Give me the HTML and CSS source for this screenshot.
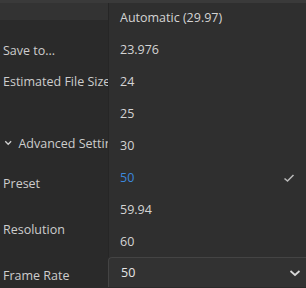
FILE: index.html
```html
<!DOCTYPE html>
<html lang="en">

<head>
	<meta charset="UTF-8">
	<meta name="viewport" content="width=device-width, initial-scale=1.0">
	<title>Export Settings</title>
	<link rel="stylesheet" href="styles.css">
</head>

<body>
	<div class="panel">
		<div class="top-strip"></div>
		<div class="top-field"></div>

		<div class="row row-save"><span class="label">Save to...</span></div>
		<div class="row row-size"><span class="label">Estimated File Size</span></div>
		<div class="row row-advanced">
			<svg class="chevron" width="10" height="8" viewBox="0 0 10 8">
				<path d="M1.5 2 L5 5.5 L8.5 2" fill="none" stroke="#cfcfcf" stroke-width="1.6" />
			</svg>
			<span class="label">Advanced Settings</span>
		</div>
		<div class="row row-preset"><span class="label">Preset</span></div>
		<div class="row row-resolution"><span class="label">Resolution</span></div>
		<div class="row row-frame">
			<span class="label">Frame Rate</span>
			<div class="select">
				<span>50</span>
				<svg width="12" height="8" viewBox="0 0 12 8">
					<path d="M1.5 2 L6 6 L10.5 2" fill="none" stroke="#d8d8d8" stroke-width="1.7" />
				</svg>
			</div>
		</div>

		<ul class="menu">
			<li>Automatic (29.97)</li>
			<li>23.976</li>
			<li>24</li>
			<li>25</li>
			<li>30</li>
			<li class="selected">50
				<svg class="check" width="12" height="10" viewBox="0 0 12 10">
					<path d="M1.5 5.5 L4.5 8 L10.5 2" fill="none" stroke="#b8b8b8" stroke-width="1.6" />
				</svg>
			</li>
			<li>59.94</li>
			<li>60</li>
		</ul>
	</div>
</body>

</html>
```

FILE: styles.css
```css
body {
	margin: 0;
	background-color: #2a2a2a;
	color: #cdcdcd;
	font-family: 'Open Sans', 'Noto Sans', sans-serif;
	font-size: 12.5px;
}

.panel {
	position: relative;
	width: 306px;
	height: 288px;
	overflow: hidden;
}

.top-strip {
	height: 3px;
	background-color: #3a3a3a;
}

.top-field {
	width: 108px;
	height: 17px;
	background-color: #333333;
}

.row {
	display: flex;
	align-items: center;
	padding-left: 3px;
	white-space: nowrap;
}

.row-save {
	height: 22px;
	margin-top: 19px;
}

.row-size {
	height: 22px;
	margin-top: 9px;
}

.row-advanced {
	width: 104px;
	height: 22px;
	margin-top: 40px;
	padding-left: 4px;
	gap: 6px;
	overflow: hidden;
}

.row-advanced .label {
	overflow: hidden;
}

.row-preset {
	height: 22px;
	margin-top: 18px;
}

.row-resolution {
	height: 22px;
	margin-top: 24px;
}

.row-frame {
	margin-top: 17px;
	height: 30px;
}

.row-frame .label {
	width: 105px;
	padding-top: 6px;
}

.select {
	flex: 1;
	height: 30px;
	display: flex;
	align-items: center;
	justify-content: space-between;
	padding: 0 5px 0 12px;
	background-color: #323232;
	border-top: 1px solid #444444;
	border-left: 1px solid #444444;
	border-top-left-radius: 4px;
	box-sizing: border-box;
	color: #e6e6e6;
}

.menu {
	position: absolute;
	left: 108px;
	top: 3px;
	right: 0;
	height: 254px;
	margin: 0;
	padding: 0;
	list-style: none;
	background-color: #2f2f2f;
	border-left: 1px solid #262626;
	box-sizing: border-box;
}

.menu li {
	position: relative;
	height: 32px;
	line-height: 30px;
	padding-left: 11px;
	color: #d4d4d4;
}

.menu li.selected {
	color: #3b88dd;
}

.check {
	position: absolute;
	right: 11px;
	top: 10px;
}
```
